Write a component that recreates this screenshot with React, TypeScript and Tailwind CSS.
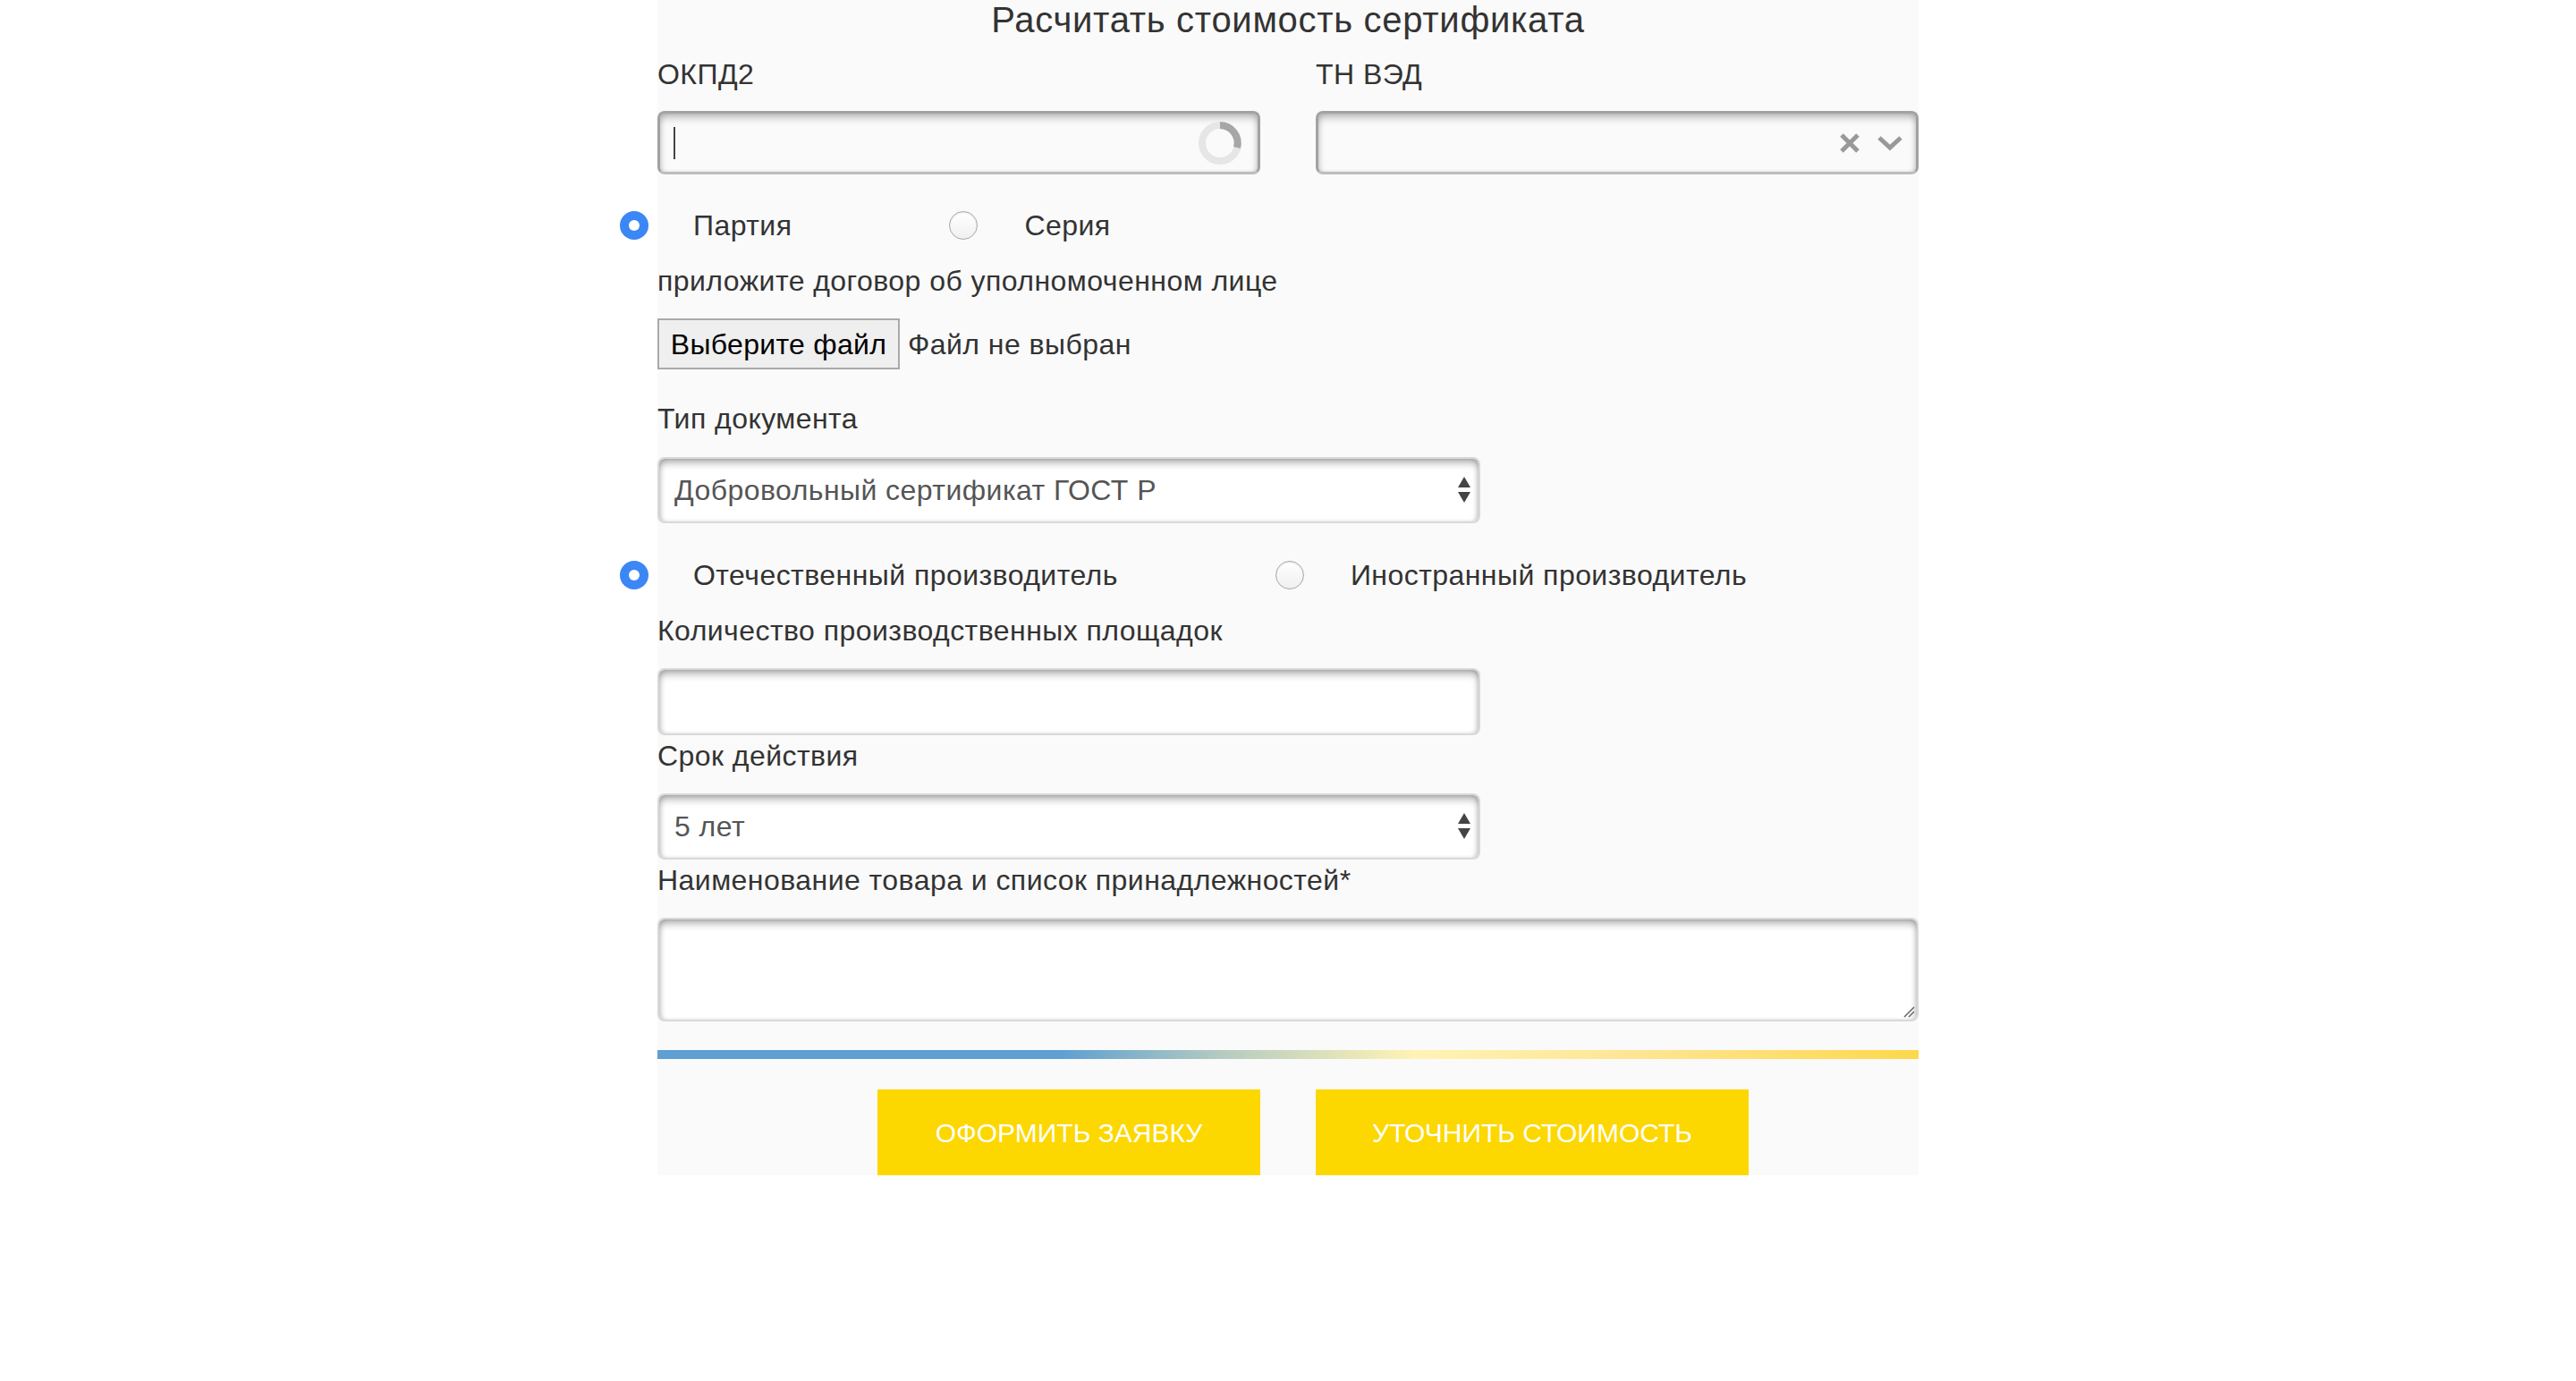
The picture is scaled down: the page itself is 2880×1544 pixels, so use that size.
import React from "react";

const font = { fontFamily: '"Liberation Sans", Arial, Helvetica, sans-serif' };

function RadioOn() {
  return (
    <span className="flex h-[32px] w-[32px] shrink-0 items-center justify-center rounded-full bg-[#3b87f5]">
      <span className="h-[12px] w-[12px] rounded-full bg-white" />
    </span>
  );
}

function RadioOff() {
  return (
    <span className="block h-[32px] w-[32px] shrink-0 rounded-full border-[1.5px] border-[#a9a9a9] bg-[linear-gradient(#ffffff,#f0f0f0)] shadow-[inset_0_1px_2px_rgba(0,0,0,0.1)]" />
  );
}

function RadioRow({ a, b }: { a: string; b: string }) {
  return (
    <div className="ml-[-42px] flex h-[40px] items-center text-[32px] tracking-[0.45px] text-[#333]">
      <RadioOn />
      <span className="ml-[50px]">{a}</span>
      <span className="ml-[176px]">
        <RadioOff />
      </span>
      <span className="ml-[52px]">{b}</span>
    </div>
  );
}

function Arrows() {
  return (
    <svg width="16" height="30" viewBox="0 0 16 30" className="absolute right-[8px] top-1/2 -translate-y-1/2">
      <polygon points="8,0 15,12 1,12" fill="#444" />
      <polygon points="1,17 15,17 8,29" fill="#444" />
    </svg>
  );
}

const fieldCls =
  "relative flex items-center rounded-[8px] border-2 border-[#d9d9d9] bg-white shadow-[inset_0_6px_10px_-2px_rgba(0,0,0,0.35),inset_3px_0_6px_-3px_rgba(0,0,0,0.2),inset_-3px_0_6px_-3px_rgba(0,0,0,0.2)]";

const labelCls = "h-[40px] text-[32px] leading-[40px] tracking-[0.45px] text-[#333]";

export default function App() {
  return (
    <div className="min-h-[1544px] w-full bg-white" style={font}>
      <div className="mx-auto w-[1410px] bg-[#fafafa]">
        <div className="h-[44px] text-center text-[40px] leading-[44px] tracking-[0.7px] text-[#333]">
          Расчитать стоимость сертификата
        </div>

        <div className="mt-[19px] grid grid-cols-2 gap-x-[62px]">
          <div>
            <div className={labelCls}>ОКПД2</div>
            <div className="relative mt-[21px] h-[71px] rounded-[8px] border-[3px] border-[#a2a2a2] border-b-[#bdbdbd] bg-[#fafafa] shadow-[inset_0_6px_10px_-2px_rgba(0,0,0,0.28),inset_3px_0_6px_-3px_rgba(0,0,0,0.15),inset_-3px_0_6px_-3px_rgba(0,0,0,0.15)]">
              <div className="absolute left-[15px] top-[15px] h-[36px] w-[2px] bg-[#444]" />
              <svg width="52" height="52" viewBox="0 0 52 52" className="absolute right-[16px] top-1/2 -translate-y-1/2">
                <circle cx="26" cy="26" r="20" fill="none" stroke="#e6e6e6" strokeWidth="8" />
                <path d="M26 6 A20 20 0 0 1 45 31" fill="none" stroke="#a6a6a6" strokeWidth="8" />
              </svg>
            </div>
          </div>
          <div>
            <div className={labelCls}>ТН ВЭД</div>
            <div className="relative mt-[21px] h-[71px] rounded-[8px] border-[3px] border-[#a2a2a2] border-b-[#bdbdbd] bg-[#fafafa] shadow-[inset_0_6px_10px_-2px_rgba(0,0,0,0.28),inset_3px_0_6px_-3px_rgba(0,0,0,0.15),inset_-3px_0_6px_-3px_rgba(0,0,0,0.15)]">
              <svg width="24" height="24" viewBox="0 0 24 24" className="absolute right-[62px] top-1/2 -translate-y-1/2">
                <path d="M3 3 L21 21 M21 3 L3 21" stroke="#999" strokeWidth="5" fill="none" />
              </svg>
              <svg width="30" height="20" viewBox="0 0 30 20" className="absolute right-[14px] top-1/2 -translate-y-1/2">
                <path d="M3 4 L15 15 L27 4" stroke="#999" strokeWidth="5" fill="none" />
              </svg>
            </div>
          </div>
        </div>

        <div className="mt-[37px]">
          <RadioRow a="Партия" b="Серия" />
        </div>

        <div className={"mt-[22px] " + labelCls}>приложите договор об уполномоченном лице</div>

        <div className="mt-[22px] flex h-[57px] items-center">
          <div className="flex h-[57px] w-[271px] items-center justify-center border-2 border-[#a9a9a9] bg-[#efefef] text-[32px] tracking-[0.3px] text-black">
            Выберите файл
          </div>
          <span className="ml-[9px] text-[32px] tracking-[0.45px] text-[#333]">Файл не выбран</span>
        </div>

        <div className={"mt-[35px] " + labelCls}>Тип документа</div>
        <div className={"mt-[23px] h-[74px] w-[920px] " + fieldCls}>
          <span className="pl-[17px] text-[32px] tracking-[0.45px] text-[#555]">Добровольный сертификат ГОСТ Р</span>
          <Arrows />
        </div>

        <div className="mt-[38px]">
          <RadioRow a="Отечественный производитель" b="Иностранный производитель" />
        </div>

        <div className={"mt-[22px] " + labelCls}>Количество производственных площадок</div>
        <div className={"mt-[22px] h-[75px] w-[920px] " + fieldCls} />

        <div className={"mt-[3px] " + labelCls}>Срок действия</div>
        <div className={"mt-[22px] h-[74px] w-[920px] " + fieldCls}>
          <span className="pl-[17px] text-[32px] tracking-[0.45px] text-[#555]">5 лет</span>
          <Arrows />
        </div>

        <div className={"mt-[3px] " + labelCls}>Наименование товара и список принадлежностей*</div>
        <div className="relative mt-[22px]">
          <textarea
            className={"block h-[116px] w-full resize-none outline-none " + fieldCls}
            defaultValue=""
          />
          <svg width="14" height="14" viewBox="0 0 14 14" className="absolute bottom-[4px] right-[4px]">
            <path d="M13 2 L2 13 M13 7 L7 13" stroke="#666" strokeWidth="1.5" fill="none" />
          </svg>
        </div>

        <div className="mt-[32px] h-[10px] w-full bg-[linear-gradient(to_right,#5f9fd1_0%,#5f9fd1_32%,#b6ccc0_45%,#fff3b5_60%,#fee592_78%,#fdd84c_100%)]" />

        <div className="mt-[34px] grid grid-cols-2 gap-x-[62px]">
          <div className="flex justify-end">
            <button className="flex h-[96px] w-[428px] items-center justify-center bg-[#fdd700] text-[30px] uppercase text-white">
              Оформить заявку
            </button>
          </div>
          <div className="flex justify-start">
            <button className="flex h-[96px] w-[484px] items-center justify-center bg-[#fdd700] text-[30px] uppercase text-white">
              Уточнить стоимость
            </button>
          </div>
        </div>
      </div>
    </div>
  );
}
